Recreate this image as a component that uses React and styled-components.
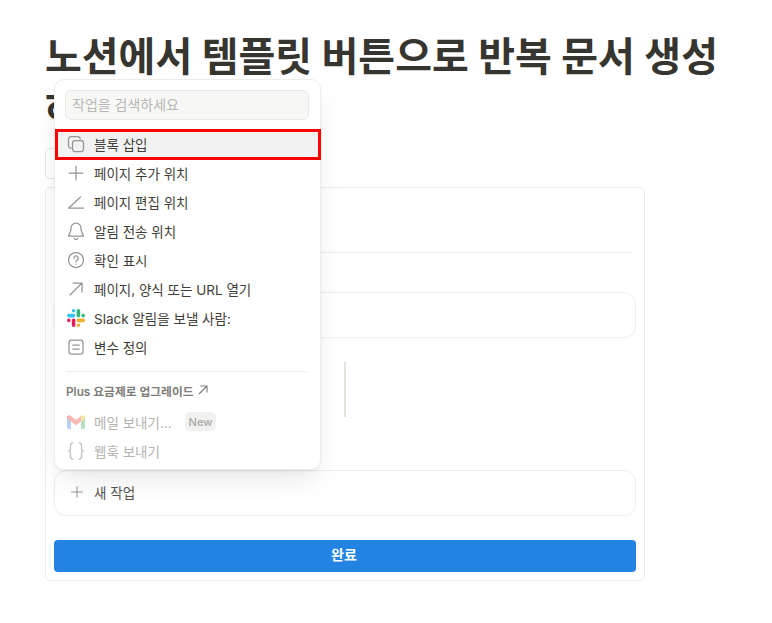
import React from 'react';
import styled, { createGlobalStyle } from 'styled-components';

const Global = createGlobalStyle`
  html, body { margin: 0; padding: 0; background: #fff; }
  body { font-family: Inter, "Noto Sans CJK KR", sans-serif; }
`;
const Page = styled.div`
  position: relative; width: 772px; height: 623px; overflow: hidden; box-sizing: border-box;
  padding: 31px 45px 0;
`;
const Title = styled.h1`
  margin: 0; width: 690px; font-size: 40px; line-height: 52px; font-weight: 700; color: #37352f;
  font-family: Inter, "Noto Sans CJK KR", sans-serif;
`;
const SmallBox = styled.div`
  width: 120px; height: 31px; margin-top: 13px; box-sizing: border-box;
  border: 1px solid #e6e6e4; border-radius: 5px;
`;
const Card = styled.div`
  margin-top: 8px; width: 600px; height: 394px; box-sizing: border-box; border: 1px solid #ebebea; border-radius: 5px;
  padding: 64px 8px 8px; display: flex; flex-direction: column;
`;
const Divider = styled.div`height: 1px; background: #efefee; margin-right: 4px;`;
const ActionBox = styled.div`
  box-sizing: border-box; width: 582px; height: ${p => p.$h}px; border: 1px solid #eeeeed; border-radius: 12px;
  box-shadow: 0 1px 2px rgba(0,0,0,.03); display: flex; align-items: center; gap: 7px; padding: 0 0 2px 12px;
  margin-top: ${p => p.$mt}px; font-size: 13.5px; color: #55534e;
`;
const VLine = styled.div`width: 2px; height: 56px; background: #e3e3de; margin: 24px 0 0 290px;`;
const Done = styled.div`
  margin-top: 24px; width: 582px; height: 32px; box-sizing: border-box; padding: 0 2px 5px 0; background: #2383e2; border-radius: 4px; color: #fff;
  font-size: 14px; font-weight: 600; display: flex; align-items: center; justify-content: center;
`;
const Menu = styled.div`
  position: absolute; left: 54px; top: 79px; width: 267px; height: 391px; box-sizing: border-box;
  background: #fff; border-radius: 10px; border: 1px solid #ededec;
  box-shadow: 0 14px 28px -6px rgba(0,0,0,.1), 0 2px 4px -1px rgba(0,0,0,.06);
  padding: 10px 1px 0; display: flex; flex-direction: column;
`;
const Search = styled.div`
  margin: 0 10px 9px 9px; height: 30px; box-sizing: border-box; background: #f7f7f5; border: 1px solid #e9e9e7; border-radius: 6px;
  color: #b9b8b5; font-size: 14px; padding: 0 0 2px 6px; display: flex; align-items: center;
`;
const Row = styled.div`
  height: 29px; flex: none; display: flex; align-items: center; gap: 8px; padding-left: 10px;
  font-size: 13.5px; color: ${p => p.$muted ? '#b4b3b0' : '#3f3d38'};
  background: ${p => p.$active ? '#f2f2f2' : 'transparent'};
`;
const IconSlot = styled.span`
  width: 20px; height: 20px; flex: none; display: flex; align-items: center; justify-content: center;
  color: ${p => p.$muted ? '#c2c1be' : '#969591'};
`;
const Highlight = styled.div`
  position: absolute; left: 55px; top: 129px; width: 266px; height: 31px; box-sizing: border-box;
  border: 3px solid #f00; pointer-events: none;
`;
const MenuRule = styled.div`height: 1px; background: #ebebea; margin: 10px 12px 0 10px;`;
const Upgrade = styled.div`
  margin: 10px 0 9px 10px; height: 16px; display: flex; align-items: center; gap: 3px;
  font-size: 11.75px; font-weight: 600; color: #7d7c78;
`;
const Badge = styled.span`
  margin-left: 5px; height: 19px; padding: 0 4px; border-radius: 5px; background: #f1f1f0; color: #a9a8a5; font-size: 11px; font-weight: 500;
  display: flex; align-items: center;
`;
const Svg = ({ children, size = 20 }) => (
  <svg width={size} height={size} viewBox="0 0 20 20" fill="none" stroke="currentColor" strokeWidth="1.25" strokeLinecap="round" strokeLinejoin="round">{children}</svg>
);
const CopyIcon = () => <Svg><rect x="6.5" y="6.5" width="11" height="11" rx="2.5" /><path d="M5 14.2A2.6 2.6 0 0 1 2.5 11.6V5.1a2.6 2.6 0 0 1 2.6-2.6h6.5A2.6 2.6 0 0 1 14.2 5" /></Svg>;
const PlusIcon = () => <Svg><path d="M10 3.2v13.6M3.2 10h13.6" /></Svg>;
const AngleIcon = () => <Svg><path d="M2.5 16.2h15M2.5 16.2 14.5 5" /></Svg>;
const BellIcon = () => <Svg><path d="M10 2.2a5 5 0 0 0-5 5c0 4.8-2.4 6.4-2.4 7.8h14.8c0-1.4-2.4-3-2.4-7.8a5 5 0 0 0-5-5Z" /><path d="M8 17.3a2.2 2.2 0 0 0 4 0" /></Svg>;
const HelpIcon = () => <Svg><circle cx="10" cy="10" r="7.5" /><path d="M7.9 8.1a2.2 2.2 0 1 1 3.3 1.9c-.8.5-1.2.9-1.2 1.8" /><path d="M10 14.1v.1" /></Svg>;
const ArrowIcon = () => <Svg><path d="M4 16 16 4M7 4h9v9" /></Svg>;
const SlackIcon = () => (
  <svg width="20" height="20" viewBox="0 0 20 20">
    <g strokeLinecap="round" strokeWidth="3.6" fill="none">
      <path stroke="#36c5f0" d="M2.8 7.6h4.8M7.6 2.8v0" />
      <path stroke="#2eb67d" d="M12.4 2.8v4.8M17.2 7.6v0" />
      <path stroke="#ecb22e" d="M17.2 12.4h-4.8M12.4 17.2v0" />
      <path stroke="#e01e5a" d="M7.6 17.2v-4.8M2.8 12.4v0" />
    </g>
  </svg>
);
const VarIcon = () => <Svg><rect x="3" y="3" width="14" height="14" rx="2.5" /><path d="M6.8 8h6.4M6.8 12h6.4" /></Svg>;
const SmallArrow = () => <svg width="12" height="12" viewBox="0 0 12 12" fill="none" stroke="currentColor" strokeWidth="1.1"><path d="M2 10 10 2M3.5 2H10v6.5" /></svg>;
const GmailIcon = () => (
  <svg width="20" height="20" viewBox="0 0 20 20" opacity="0.8">
    <path fill="#a8d8b5" d="M15 17V8.5L19 5v10.5a1.5 1.5 0 0 1-1.5 1.5Z" />
    <path fill="#a7c5f5" d="M5 17V8.5L1 5v10.5A1.5 1.5 0 0 0 2.5 17Z" />
    <path fill="#f5a8a2" d="M5 9.5 10 13.2l5-3.7V4L10 7.8 5 4Z" />
    <path fill="#f3a29b" d="M1 5.5C1 3.6 3.2 2.7 4.4 3.6L5 4v5.5L1 6.5Z" />
    <path fill="#f9dd8c" d="M19 5.5c0-1.9-2.2-2.8-3.4-1.9L15 4v5.5l4-3Z" />
  </svg>
);
const BracesIcon = () => <Svg><path d="M7 1.8C5 1.8 4.5 2.9 4.5 4.2v3.6c0 1.2-.6 2-2 2.2 1.4.2 2 1 2 2.2v3.6c0 1.3.5 2.4 2.5 2.4M13 1.8c2 0 2.5 1.1 2.5 2.4v3.6c0 1.2.6 2 2 2.2-1.4.2-2 1-2 2.2v3.6c0 1.3-.5 2.4-2.5 2.4" /></Svg>;

const rows = [
  [CopyIcon, '블록 삽입', true],
  [PlusIcon, '페이지 추가 위치'],
  [AngleIcon, '페이지 편집 위치'],
  [BellIcon, '알림 전송 위치'],
  [HelpIcon, '확인 표시'],
  [ArrowIcon, '페이지, 양식 또는 URL 열기'],
  [SlackIcon, 'Slack 알림을 보낼 사람:'],
  [VarIcon, '변수 정의'],
];

export default function App() {
  return (
    <Page>
      <Global />
      <Title>노션에서 템플릿 버튼으로 반복 문서 생성<br />하기</Title>
      <SmallBox />
      <Card>
        <Divider />
        <ActionBox $h={46} $mt={39} />
        <VLine />
        <ActionBox $h={46} $mt={53}>
          <IconSlot><Svg size={16}><path d="M10 3.3v13.4M3.3 10h13.4" /></Svg></IconSlot>
          새 작업
        </ActionBox>
        <Done>완료</Done>
      </Card>
      <Menu>
        <Search>작업을 검색하세요</Search>
        {rows.map(([Icon, label, active]) => (
          <Row key={label} $active={active}><IconSlot><Icon /></IconSlot>{label}</Row>
        ))}
        <MenuRule />
        <Upgrade>Plus 요금제로 업그레이드<SmallArrow /></Upgrade>
        <Row $muted><IconSlot $muted><GmailIcon /></IconSlot>메일 보내기...<Badge>New</Badge></Row>
        <Row $muted><IconSlot $muted><BracesIcon /></IconSlot>웹훅 보내기</Row>
      </Menu>
      <Highlight />
    </Page>
  );
}
